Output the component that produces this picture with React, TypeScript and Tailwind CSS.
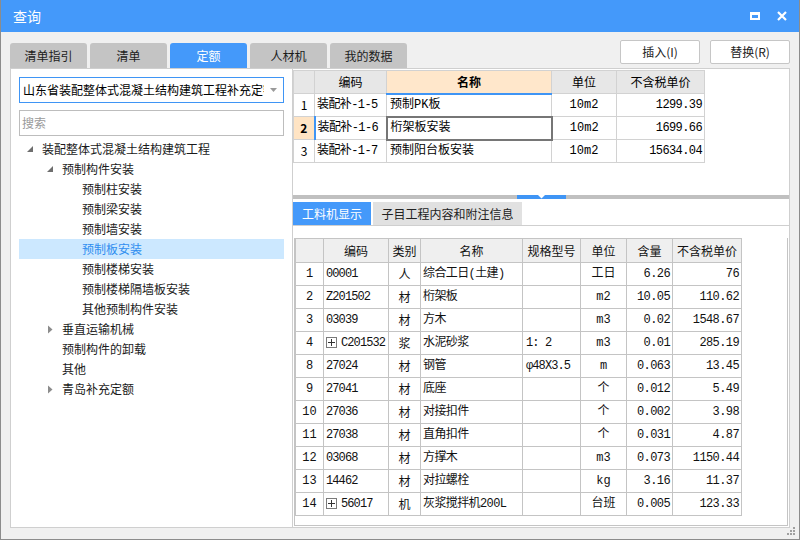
import React from "react";

const ui = "font-['Microsoft_YaHei','Noto_Sans_CJK_SC',sans-serif]";
const mono = "font-['Liberation_Mono','Noto_Sans_CJK_SC',monospace]";

const tabs = ["清单指引", "清单", "定额", "人材机", "我的数据"];

type TreeNode = { label: string; level: number; arrow?: "open" | "closed"; selected?: boolean };

const tree: TreeNode[] = [
  { label: "装配整体式混凝土结构建筑工程", level: 0, arrow: "open" },
  { label: "预制构件安装", level: 1, arrow: "open" },
  { label: "预制柱安装", level: 2 },
  { label: "预制梁安装", level: 2 },
  { label: "预制墙安装", level: 2 },
  { label: "预制板安装", level: 2, selected: true },
  { label: "预制楼梯安装", level: 2 },
  { label: "预制楼梯隔墙板安装", level: 2 },
  { label: "其他预制构件安装", level: 2 },
  { label: "垂直运输机械", level: 1, arrow: "closed" },
  { label: "预制构件的卸载", level: 1 },
  { label: "其他", level: 1 },
  { label: "青岛补充定额", level: 1, arrow: "closed" },
];

const topRows = [
  { n: "1", code: "装配补-1-5", name: "预制PK板", unit: "10m2", price: "1299.39" },
  { n: "2", code: "装配补-1-6", name: "桁架板安装", unit: "10m2", price: "1699.66" },
  { n: "3", code: "装配补-1-7", name: "预制阳台板安装", unit: "10m2", price: "15634.04" },
];

const bottomRows = [
  { n: "1", code: "00001", kind: "人", name: "综合工日(土建)", spec: "", unit: "工日", qty: "6.26", price: "76" },
  { n: "2", code: "Z201502", kind: "材", name: "桁架板", spec: "", unit: "m2", qty: "10.05", price: "110.62" },
  { n: "3", code: "03039", kind: "材", name: "方木", spec: "", unit: "m3", qty: "0.02", price: "1548.67" },
  { n: "4", code: "C201532", kind: "浆", name: "水泥砂浆", spec: "1: 2", unit: "m3", qty: "0.01", price: "285.19", plus: true },
  { n: "8", code: "27024", kind: "材", name: "钢管", spec: "φ48X3.5", unit: "m", qty: "0.063", price: "13.45" },
  { n: "9", code: "27041", kind: "材", name: "底座", spec: "", unit: "个", qty: "0.012", price: "5.49" },
  { n: "10", code: "27036", kind: "材", name: "对接扣件", spec: "", unit: "个", qty: "0.002", price: "3.98" },
  { n: "11", code: "27038", kind: "材", name: "直角扣件", spec: "", unit: "个", qty: "0.031", price: "4.87" },
  { n: "12", code: "03068", kind: "材", name: "方撑木", spec: "", unit: "m3", qty: "0.073", price: "1150.44" },
  { n: "13", code: "14462", kind: "材", name: "对拉螺栓", spec: "", unit: "kg", qty: "3.16", price: "11.37" },
  { n: "14", code: "56017", kind: "机", name: "灰浆搅拌机200L", spec: "", unit: "台班", qty: "0.005", price: "123.33", plus: true },
];

const Arrow = ({ kind }: { kind: "open" | "closed" }) =>
  kind === "open" ? (
    <svg width="8" height="8" viewBox="0 0 8 8">
      <path d="M7 1 L7 7 L1 7 Z" fill="#6e6e6e" />
    </svg>
  ) : (
    <svg width="8" height="9" viewBox="0 0 8 9">
      <path d="M2 0.5 L6.5 4.5 L2 8.5 Z" fill="#8c8c8c" />
    </svg>
  );

const PlusBox = () => (
  <span className="inline-flex w-[11px] h-[11px] border border-[#7a7a7a] items-center justify-center mr-[4px] bg-white shrink-0">
    <svg width="7" height="7" viewBox="0 0 7 7">
      <path d="M3.5 0 V7 M0 3.5 H7" stroke="#333" strokeWidth="1" />
    </svg>
  </span>
);

const LeftPanel = () => (
  <div className="w-[283px] h-full bg-white border border-[#cfcfcf] flex flex-col px-[8px] pt-[8px]">
    <div className="h-[26px] border border-[#3f95f5] flex items-center pl-[3px] pr-[6px] overflow-hidden">
      <span className={`${ui} text-[12px] text-black whitespace-nowrap overflow-hidden flex-1`}>
        山东省装配整体式混凝土结构建筑工程补充定额
      </span>
      <svg width="7" height="4" viewBox="0 0 7 4" className="ml-[6px] shrink-0">
        <path d="M0 0 H7 L3.5 4 Z" fill="#9a9a9a" />
      </svg>
    </div>
    <div className="h-[26px] mt-[7px] border border-[#bdbdbd] flex items-center pl-[2px]">
      <span className={`${ui} text-[12px] text-[#9a9a9a]`}>搜索</span>
    </div>
    <div className="mt-[3px] flex flex-col">
      {tree.map((t) => (
        <div
          key={t.label}
          className={`h-[20px] flex items-center ${t.selected ? "bg-[#cce8ff]" : ""}`}
        >
          <div style={{ width: 7 + t.level * 20 }} className="shrink-0" />
          <div className="w-[16px] shrink-0 flex items-center">{t.arrow && <Arrow kind={t.arrow} />}</div>
          <span
            className={`${ui} text-[12px] leading-[20px] whitespace-nowrap ${
              t.selected ? "text-[#2f8ef0]" : "text-[#1a1a1a]"
            }`}
          >
            {t.label}
          </span>
        </div>
      ))}
    </div>
  </div>
);

const TopGrid = () => (
  <table className="border-collapse table-fixed">
    <colgroup>
      <col className="w-[21px]" />
      <col className="w-[72px]" />
      <col className="w-[165px]" />
      <col className="w-[65px]" />
      <col className="w-[88px]" />
    </colgroup>
    <thead>
      <tr className={`${ui} text-[12px] h-[23px]`}>
        <th className="bg-[#e7e7e7] border border-[#d2d2d2]" />
        <th className="bg-[#e7e7e7] border border-[#d2d2d2] font-normal">编码</th>
        <th className="bg-[#ffe7cb] border border-[#d2d2d2] border-b-2 border-b-[#3f95f5] font-bold">名称</th>
        <th className="bg-[#e7e7e7] border border-[#d2d2d2] font-normal">单位</th>
        <th className="bg-[#e7e7e7] border border-[#d2d2d2] font-normal">不含税单价</th>
      </tr>
    </thead>
    <tbody>
      {topRows.map((r) => {
        const sel = r.n === "2";
        return (
          <tr key={r.n} className={`${mono} text-[12px] h-[23px] text-black`}>
            <td
              className={`border border-[#d2d2d2] text-center ${ui} ${
                sel ? "bg-[#ffe4c4] font-bold" : "bg-white"
              }`}
            >
              {r.n}
            </td>
            <td
              className={`border border-[#d2d2d2] pl-[2px] whitespace-nowrap tracking-[-0.6px] ${
                sel ? "border-l-2 border-l-[#3f95f5]" : ""
              }`}
            >
              {r.code}
            </td>
            <td className={`border pl-[3px] whitespace-nowrap ${sel ? "border-2 border-[#767676]" : "border-[#d2d2d2]"}`}>
              {r.name}
            </td>
            <td className="border border-[#d2d2d2] text-center">{r.unit}</td>
            <td className="border border-[#d2d2d2] text-right pr-[2px] tracking-[-0.6px]">{r.price}</td>
          </tr>
        );
      })}
    </tbody>
  </table>
);

const BottomGrid = () => (
  <table className="border-collapse table-fixed">
    <colgroup>
      <col className="w-[28px]" />
      <col className="w-[65px]" />
      <col className="w-[32px]" />
      <col className="w-[102px]" />
      <col className="w-[58px]" />
      <col className="w-[46px]" />
      <col className="w-[46px]" />
      <col className="w-[69px]" />
    </colgroup>
    <thead>
      <tr className={`${ui} text-[12px] h-[24px]`}>
        {["", "编码", "类别", "名称", "规格型号", "单位", "含量", "不含税单价"].map((h, i) => (
          <th key={i} className="bg-[#efefef] border border-[#c4c4c4] font-normal text-[#111] whitespace-nowrap">
            {h}
          </th>
        ))}
      </tr>
    </thead>
    <tbody>
      {bottomRows.map((r) => (
        <tr key={r.n} className={`${mono} text-[12px] h-[23px] text-[#111]`}>
          <td className="border border-[#c4c4c4] text-center">{r.n}</td>
          <td className="border border-[#c4c4c4] pl-[2px] whitespace-nowrap tracking-[-0.9px] overflow-hidden">
            <span className="inline-flex items-center">
              {r.plus && <PlusBox />}
              {r.code}
            </span>
          </td>
          <td className={`border border-[#c4c4c4] text-center ${ui}`}>{r.kind}</td>
          <td className="border border-[#c4c4c4] pl-[2px] whitespace-nowrap tracking-[-0.6px]">{r.name}</td>
          <td className="border border-[#c4c4c4] pl-[3px] whitespace-nowrap tracking-[-0.9px]">{r.spec}</td>
          <td className="border border-[#c4c4c4] text-center">{r.unit}</td>
          <td className="border border-[#c4c4c4] text-right pr-[2px] tracking-[-0.6px]">{r.qty}</td>
          <td className="border border-[#c4c4c4] text-right pr-[2px] tracking-[-0.6px]">{r.price}</td>
        </tr>
      ))}
    </tbody>
  </table>
);

const RightPanel = () => (
  <div className="w-[497px] h-full bg-white border border-[#cfcfcf] border-l-0 flex flex-col">
    <div className="h-[126px] pt-[1px]">
      <TopGrid />
    </div>
    <div className="h-[4px] bg-[#c0c0c0] flex justify-center">
      <div className="w-[49px] h-[4px] bg-[#3f95f5] flex justify-center">
        <svg width="7" height="4" viewBox="0 0 7 4">
          <path d="M0 0 H7 L3.5 3.5 Z" fill="#ffffff" />
        </svg>
      </div>
    </div>
    <div className="h-[3px]" />
    <div className="h-[24px] flex gap-[2px] border-b border-[#cfcfcf]">
      <div className={`${ui} w-[78px] bg-[#4499fa] text-white text-[12px] flex items-center justify-center`}>
        工料机显示
      </div>
      <div className={`${ui} w-[149px] bg-[#e1e1e1] text-[#222] text-[12px] flex items-center justify-center`}>
        子目工程内容和附注信息
      </div>
    </div>
    <div className="flex-1 pt-[12px] pl-[1px] pr-[1px] pb-[1px] flex flex-col">
      <div className="flex-1 border border-[#c4c4c4] border-t-0">
        <BottomGrid />
      </div>
    </div>
  </div>
);

export default function App() {
  return (
    <div className="w-[800px] h-[540px] bg-[#f0f0f0] border border-[#8c8c8c] border-t-0 flex flex-col relative overflow-hidden">
      <div className="h-[32px] bg-[#4499fa] flex items-center justify-between px-[12px] shrink-0">
        <span className={`${ui} text-white text-[14px]`}>查询</span>
        <div className="flex items-center gap-[17px]">
          <div className="w-[10px] h-[8px] border-2 border-white border-t-[3px]" />
          <svg width="10" height="10" viewBox="0 0 10 10">
            <path d="M1 1 L9 9 M9 1 L1 9" stroke="#ffffff" strokeWidth="2.2" />
          </svg>
        </div>
      </div>
      <div className="flex justify-between items-start px-[9px] h-[36px] shrink-0">
        <div className="flex gap-[3px] mt-[11px]">
          {tabs.map((t) => (
            <div
              key={t}
              className={`${ui} w-[77px] h-[25px] rounded-t-[3px] flex items-center justify-center text-[12px] ${
                t === "定额" ? "bg-[#4499fa] text-white" : "bg-[#c4c4c4] text-[#1c1c1c]"
              }`}
            >
              {t}
            </div>
          ))}
        </div>
        <div className="flex gap-[10px] mt-[8px]">
          {["插入(I)", "替换(R)"].map((b) => (
            <div
              key={b}
              className={`${ui} w-[80px] h-[24px] bg-white border border-[#c6c6c6] rounded-[2px] flex items-center justify-center text-[12px] text-[#222]`}
            >
              {b}
            </div>
          ))}
        </div>
      </div>
      <div className="flex px-[9px] h-[460px] shrink-0">
        <LeftPanel />
        <RightPanel />
      </div>
      <svg className="absolute right-[3px] bottom-[3px]" width="9" height="9" viewBox="0 0 9 9">
        <rect x="6" y="0" width="2" height="2" fill="#a0a0a0" />
        <rect x="3" y="3" width="2" height="2" fill="#a0a0a0" />
        <rect x="6" y="3" width="2" height="2" fill="#a0a0a0" />
        <rect x="0" y="6" width="2" height="2" fill="#a0a0a0" />
        <rect x="3" y="6" width="2" height="2" fill="#a0a0a0" />
        <rect x="6" y="6" width="2" height="2" fill="#a0a0a0" />
      </svg>
    </div>
  );
}
